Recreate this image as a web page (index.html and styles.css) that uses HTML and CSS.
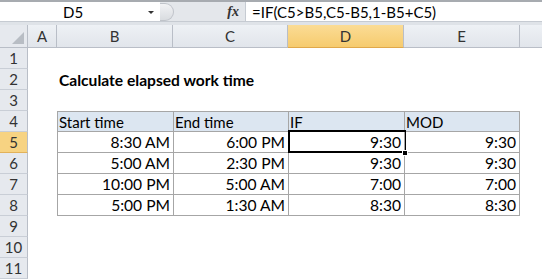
FILE: index.html
```html
<!DOCTYPE html>
<html>
<head>
<meta charset="utf-8">
<link rel="stylesheet" href="styles.css">
</head>
<body>
<div class="fbar">
  <div class="namebox"><span class="ref">D5</span><span class="drop"></span></div>
  <div class="fmid"><span class="grip"></span><span class="fx">fx</span></div>
  <div class="formula">=IF(C5&gt;B5,C5-B5,1-B5+C5)</div>
</div>
<div class="sheet">
  <div class="corner"><span class="tri"></span></div>
  <div class="ch">A</div><div class="ch">B</div><div class="ch">C</div><div class="ch sel">D</div><div class="ch">E</div><div class="ch last"></div>

  <div class="rh">1</div><div></div><div></div><div></div><div></div><div></div><div></div>
  <div class="rh">2</div><div></div><div class="title">Calculate elapsed work time</div><div></div><div></div><div></div><div></div>
  <div class="rh">3</div><div></div><div></div><div></div><div></div><div></div><div></div>

  <div class="rh">4</div><div></div>
  <div class="t th first top">Start time</div><div class="t th top">End time</div><div class="t th top">IF</div><div class="t th top lastc">MOD</div><div></div>

  <div class="rh sel">5</div><div></div>
  <div class="t first">8:30 AM</div><div class="t">6:00 PM</div><div class="t active">9:30<span class="handle"></span></div><div class="t lastc">9:30</div><div></div>

  <div class="rh">6</div><div></div>
  <div class="t first">5:00 AM</div><div class="t">2:30 PM</div><div class="t">9:30</div><div class="t lastc">9:30</div><div></div>

  <div class="rh">7</div><div></div>
  <div class="t first">10:00 PM</div><div class="t">5:00 AM</div><div class="t">7:00</div><div class="t lastc">7:00</div><div></div>

  <div class="rh">8</div><div></div>
  <div class="t first bot">5:00 PM</div><div class="t bot">1:30 AM</div><div class="t bot">8:30</div><div class="t lastc bot">8:30</div><div></div>

  <div class="rh">9</div><div></div><div></div><div></div><div></div><div></div><div></div>
  <div class="rh">10</div><div></div><div></div><div></div><div></div><div></div><div></div>
  <div class="rh">11</div><div></div><div></div><div></div><div></div><div></div><div></div>
</div>
</body>
</html>
```
FILE: styles.css
```css
* { box-sizing: border-box; }
html, body { margin: 0; padding: 0; background: #fff; }
body {
  width: 542px;
  height: 279px;
  overflow: hidden;
  font-family: Lato, "Open Sans", sans-serif;
  font-size: 15px;
  color: #000;
}
.fbar {
  display: flex;
  height: 25px;
  border-top: 2px solid #a7abb0;
  border-bottom: 3px solid #dfe3e8;
  background: #dfe3e8;
}
.namebox {
  width: 160px;
  background: #fff;
  display: flex;
  align-items: center;
  position: relative;
  border-bottom: 1px solid #c6cbd2;
}
.ref { margin-left: 63px; font-size: 15px; }
.drop {
  position: absolute;
  left: 148px;
  top: 9px;
  width: 0; height: 0;
  border-left: 3px solid transparent;
  border-right: 3px solid transparent;
  border-top: 3px solid #333;
}
.fmid {
  width: 85px;
  display: flex;
  align-items: center;
  justify-content: space-between;
  padding: 0 4px 0 0;
  background: #e4e7eb;
  border-bottom: 1px solid #c6cbd2;
}
.grip {
  width: 14px; height: 18px;
  border-radius: 0 9px 9px 0;
  border: 1px solid #c0c4ca;
  border-left: none;
  background: linear-gradient(#f2f3f5, #d9dce0);
}
.fx {
  font-family: "Liberation Serif", serif;
  font-style: italic;
  font-weight: bold;
  font-size: 14px;
  color: #333;
  margin-right: 2px;
}
.formula {
  flex: 1;
  background: #fff;
  padding-left: 6px;
  display: flex;
  align-items: center;
  border-left: 1px solid #c6cbd2;
  border-bottom: 1px solid #c6cbd2;
  font-size: 15px;
}
.sheet {
  display: grid;
  grid-template-columns: 28px 29px 116px 115px 116px 116px 22px;
  grid-template-rows: 23px repeat(11, 21px);
}
.corner {
  background: #e6e9ee;
  border-right: 1px solid #b9bec7;
  border-bottom: 1px solid #b9bec7;
  position: relative;
}
.tri {
  position: absolute;
  right: 3px;
  bottom: 3px;
  width: 0; height: 0;
  border-left: 12px solid transparent;
  border-bottom: 12px solid #b8bdc4;
}
.ch {
  background: linear-gradient(#eef1f5, #e1e5eb);
  border-right: 1px solid #b9bec7;
  border-bottom: 1px solid #b9bec7;
  display: flex;
  align-items: center;
  justify-content: center;
  color: #333;
  font-size: 15px;
}
.ch.sel {
  background: linear-gradient(#fbdc95, #f6cb6e);
  border-bottom-color: #e0a84a;
}
.ch.last { border-right: none; }
.rh {
  background: #e6e9ee;
  border-right: 1px solid #b9bec7;
  border-bottom: 1px solid #c9ced6;
  display: flex;
  align-items: center;
  justify-content: center;
  color: #333;
  font-size: 15px;
}
.rh.sel { background: #f7d382; border-bottom-color: #e2b25a; }
.title {
  font-weight: bold;
  font-size: 15.6px;
  white-space: nowrap;
  display: flex;
  align-items: center;
  padding-left: 2px;
}
.t {
  border-left: 1px solid #a6a6a6;
  border-bottom: 1px solid #a6a6a6;
  display: flex;
  align-items: center;
  justify-content: flex-end;
  padding: 0 3px 0 1px;
  white-space: nowrap;
  position: relative;
  font-size: 15.6px;
}
.t.th { background: #dce6f1; justify-content: flex-start; font-size: 15px; }
.t.top { border-top: 1px solid #a6a6a6; }
.t.lastc { border-right: 1px solid #a6a6a6; }
.active::after {
  content: "";
  position: absolute;
  left: -1px; top: -2px; right: -2px; bottom: -1px;
  border: 2px solid #000;
}
.handle {
  position: absolute;
  right: -4px;
  bottom: -4px;
  width: 6px; height: 6px;
  background: #000;
  border: 1px solid #fff;
  z-index: 2;
}
```
